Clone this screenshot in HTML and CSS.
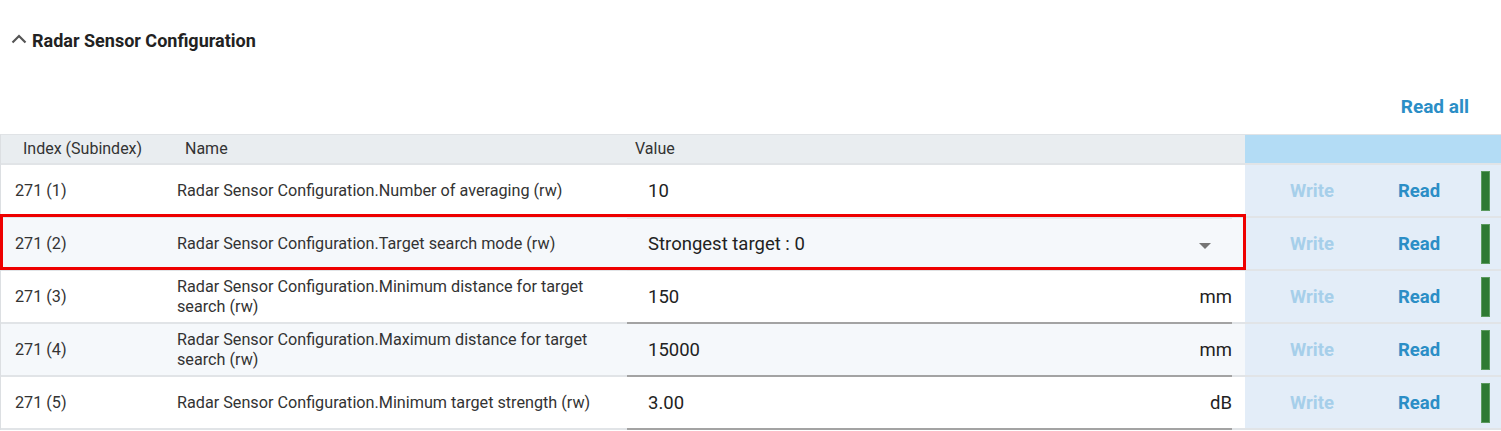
FILE: index.html
```html
<!DOCTYPE html>
<html lang="en">
<head>
<meta charset="utf-8">
<title>Radar Sensor Configuration</title>
<link rel="stylesheet" href="styles.css">
</head>
<body>
<section class="panel">
  <header class="panel-head">
    <svg class="chevron" width="16" height="12" viewBox="0 0 16 12" aria-hidden="true">
      <polyline points="1.5,9.5 8,3 14.5,9.5" fill="none" stroke="#555" stroke-width="2.2"/>
    </svg>
    <h2 class="panel-title">Radar Sensor Configuration</h2>
  </header>
  <div class="toolbar">
    <button class="link-btn strong">Read all</button>
  </div>

  <div class="table">
    <div class="row head-row">
      <div class="main">
        <div class="cell c-index">Index (Subindex)</div>
        <div class="cell c-name">Name</div>
        <div class="cell c-value">Value</div>
      </div>
      <div class="actions"></div>
    </div>

    <div class="row">
      <div class="main">
        <div class="cell c-index">271 (1)</div>
        <div class="cell c-name">Radar Sensor Configuration.Number of averaging (rw)</div>
        <div class="cell c-value"><div class="field plain"><span class="val">10</span></div></div>
      </div>
      <div class="actions"><span class="act write">Write</span><span class="act read">Read</span><span class="status"></span></div>
    </div>

    <div class="row alt">
      <div class="main selected">
        <div class="cell c-index">271 (2)</div>
        <div class="cell c-name">Radar Sensor Configuration.Target search mode (rw)</div>
        <div class="cell c-value"><div class="field select"><span class="val">Strongest target : 0</span><span class="caret"></span></div></div>
      </div>
      <div class="actions"><span class="act write">Write</span><span class="act read">Read</span><span class="status"></span></div>
    </div>

    <div class="row">
      <div class="main">
        <div class="cell c-index">271 (3)</div>
        <div class="cell c-name">Radar Sensor Configuration.Minimum distance for target search (rw)</div>
        <div class="cell c-value"><div class="field input"><span class="val">150</span><span class="unit">mm</span></div></div>
      </div>
      <div class="actions"><span class="act write">Write</span><span class="act read">Read</span><span class="status"></span></div>
    </div>

    <div class="row alt">
      <div class="main">
        <div class="cell c-index">271 (4)</div>
        <div class="cell c-name">Radar Sensor Configuration.Maximum distance for target search (rw)</div>
        <div class="cell c-value"><div class="field input"><span class="val">15000</span><span class="unit">mm</span></div></div>
      </div>
      <div class="actions"><span class="act write">Write</span><span class="act read">Read</span><span class="status"></span></div>
    </div>

    <div class="row">
      <div class="main">
        <div class="cell c-index">271 (5)</div>
        <div class="cell c-name">Radar Sensor Configuration.Minimum target strength (rw)</div>
        <div class="cell c-value"><div class="field input"><span class="val">3.00</span><span class="unit">dB</span></div></div>
      </div>
      <div class="actions"><span class="act write">Write</span><span class="act read">Read</span><span class="status"></span></div>
    </div>
  </div>
</section>
</body>
</html>
```

FILE: styles.css
```css
* { box-sizing: border-box; }

html, body {
  margin: 0;
  padding: 0;
  background: #ffffff;
}

body {
  font-family: Roboto, "Liberation Sans", Arial, sans-serif;
  color: #2b2b2b;
  width: 1501px;
  overflow: hidden;
}

.panel-head {
  display: flex;
  align-items: center;
  gap: 5px;
  padding: 30px 0 0 11px;
  height: 52px;
}

.chevron { display: block; margin-top: -5px; }

.panel-title {
  margin: 0;
  font-size: 18px;
  font-weight: 700;
  line-height: 22px;
  color: #222;
}

.toolbar {
  display: flex;
  justify-content: flex-end;
  padding: 44px 32px 0 0;
  height: 82px;
}

.link-btn {
  border: 0;
  background: none;
  padding: 0;
  font: inherit;
  font-size: 19px;
  font-weight: 700;
  line-height: 22px;
  height: 22px;
  color: #2b8ec6;
  cursor: pointer;
}

.table {
  border-left: 1px solid #dcdfe2;
  border-top: 1px solid #e0e3e6;
}

.row {
  display: flex;
  height: 53px;
  border-bottom: 2px solid #e1e4e7;
  background: #ffffff;
}

.row.alt { background: #f5f8fb; }

.main {
  position: relative;
  width: 1244px;
  display: grid;
  grid-template-columns: 169px 457px 1fr;
  align-items: center;
}

.actions {
  flex: 1;
  display: flex;
  align-items: center;
  background: #e3edf8;
  padding-left: 45px;
}

.head-row {
  height: 30px;
  background: #e9edf0;
}

.head-row .actions { background: #b3dcf5; }

.cell {
  font-size: 16.2px;
  line-height: 20px;
  color: #333;
}

.c-index { padding-left: 14px; }
.c-name { padding-left: 7px; padding-right: 20px; }

.head-row .cell { font-size: 16px; color: #333; }
.head-row .c-index { padding-left: 22px; }
.head-row .c-name { padding-left: 15px; }
.head-row .c-value { padding-left: 8px; }

.row:not(.head-row) .c-value {
  align-self: stretch;
  display: flex;
  padding-right: 13px;
  margin-bottom: -2px;
}

.field {
  flex: 1;
  display: flex;
  align-items: center;
  padding-left: 21px;
  font-size: 18.5px;
  color: #222;
}

.field .val { flex: 1; }

.field.input { border-bottom: 2px solid #a3a3a3; }
.field.select {
  border-top: 1px solid #e6e8ea;
  border-bottom: 2px solid #dfe1e3;
  padding-right: 21px;
}
.field.plain { border-bottom: 2px solid transparent; }

.caret {
  width: 0;
  height: 0;
  border-left: 6px solid transparent;
  border-right: 6px solid transparent;
  border-top: 6px solid #757575;
  margin-top: 3px;
}

.selected::after {
  content: "";
  position: absolute;
  left: -1px;
  right: -1px;
  top: -4px;
  bottom: -1px;
  border: 3px solid #ee0000;
  pointer-events: none;
}

.act {
  font-size: 18.5px;
  font-weight: 700;
}

.act.write { color: #a6cfea; width: 108px; }
.act.read { color: #2b8ec6; width: 83px; }

.status {
  width: 9px;
  height: 40px;
  background: #2e7a33;
  border: 1px solid #5b9a5f;
}
```
